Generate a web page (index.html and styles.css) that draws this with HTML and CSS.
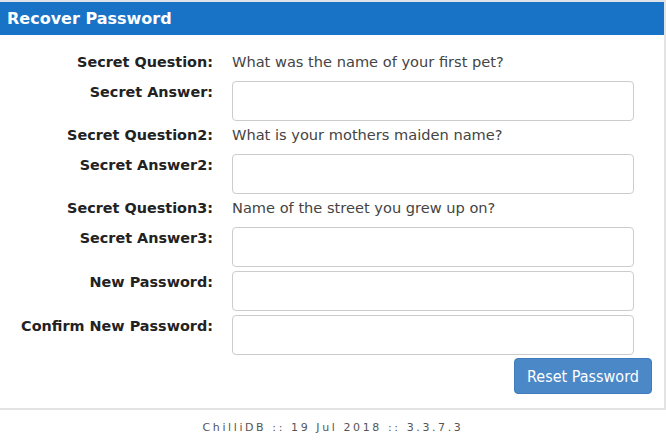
FILE: index.html
```html
<!DOCTYPE html>
<html>
<head>
<meta charset="utf-8">
<link rel="stylesheet" href="styles.css">
</head>
<body>
<div class="panel">
  <div class="panel-head">Recover Password</div>
  <form class="form">
    <div class="row q"><label class="lbl">Secret Question:</label><span class="val">What was the name of your first pet?</span></div>
    <div class="row in"><label class="lbl">Secret Answer:</label><input class="field" type="text"></div>
    <div class="row q"><label class="lbl">Secret Question2:</label><span class="val">What is your mothers maiden name?</span></div>
    <div class="row in"><label class="lbl">Secret Answer2:</label><input class="field" type="text"></div>
    <div class="row q"><label class="lbl">Secret Question3:</label><span class="val">Name of the street you grew up on?</span></div>
    <div class="row in"><label class="lbl">Secret Answer3:</label><input class="field" type="text"></div>
    <div class="row in"><label class="lbl">New Password:</label><input class="field" type="password"></div>
    <div class="row in"><label class="lbl">Confirm New Password:</label><input class="field" type="password"></div>
    <div class="actions"><button type="button" class="btn">Reset Password</button></div>
  </form>
</div>
<div class="footer">ChilliDB :: 19 Jul 2018 :: 3.3.7.3</div>
</body>
</html>
```
FILE: styles.css
```css
html, body {
  margin: 0;
  padding: 0;
  background: #fff;
  font-family: "DejaVu Sans", Verdana, sans-serif;
}
.panel {
  box-sizing: border-box;
  width: 666px;
  border-top: 2px solid #dfe3e8;
  border-right: 2px solid #e3e3e3;
  border-bottom: 2px solid #e3e3e3;
}
.panel-head {
  background: #1873c7;
  color: #fff;
  font-weight: bold;
  font-size: 16px;
  height: 33px;
  line-height: 34px;
  padding-left: 7px;
}
.form {
  margin: 0;
  padding: 13px 0 14px 0;
}
.row {
  display: grid;
  grid-template-columns: 213px 402px;
  column-gap: 19px;
}
.row.q {
  padding: 5px 0 10px;
  line-height: 18px;
}
.row.in + .row.in {
  margin-top: 4px;
}
.lbl {
  text-align: right;
  font-weight: bold;
  font-size: 14.4px;
  color: #222;
  line-height: 18px;
  white-space: nowrap;
}
.row.in .lbl {
  padding-top: 2px;
}
.val {
  font-size: 14.6px;
  color: #444;
  white-space: nowrap;
}
.field {
  box-sizing: border-box;
  height: 40px;
  width: 402px;
  border: 1px solid #ccc;
  border-radius: 4px;
  margin: 0;
  padding: 6px 10px;
  background: #fff;
}
.actions {
  display: flex;
  justify-content: flex-end;
  margin-top: 3px;
  padding-right: 12px;
}
.btn {
  height: 36px;
  width: 138px;
  background: #4a88c8;
  border: 1px solid #3f7bbd;
  border-radius: 4px;
  color: #fff;
  font-family: "DejaVu Sans Condensed", "DejaVu Sans", sans-serif;
  font-size: 16px;
  padding: 0;
}
.footer {
  text-align: center;
  font-size: 11px;
  letter-spacing: 2.6px;
  color: #555;
  padding-top: 11px;
  font-family: "DejaVu Sans", sans-serif;
}
```
